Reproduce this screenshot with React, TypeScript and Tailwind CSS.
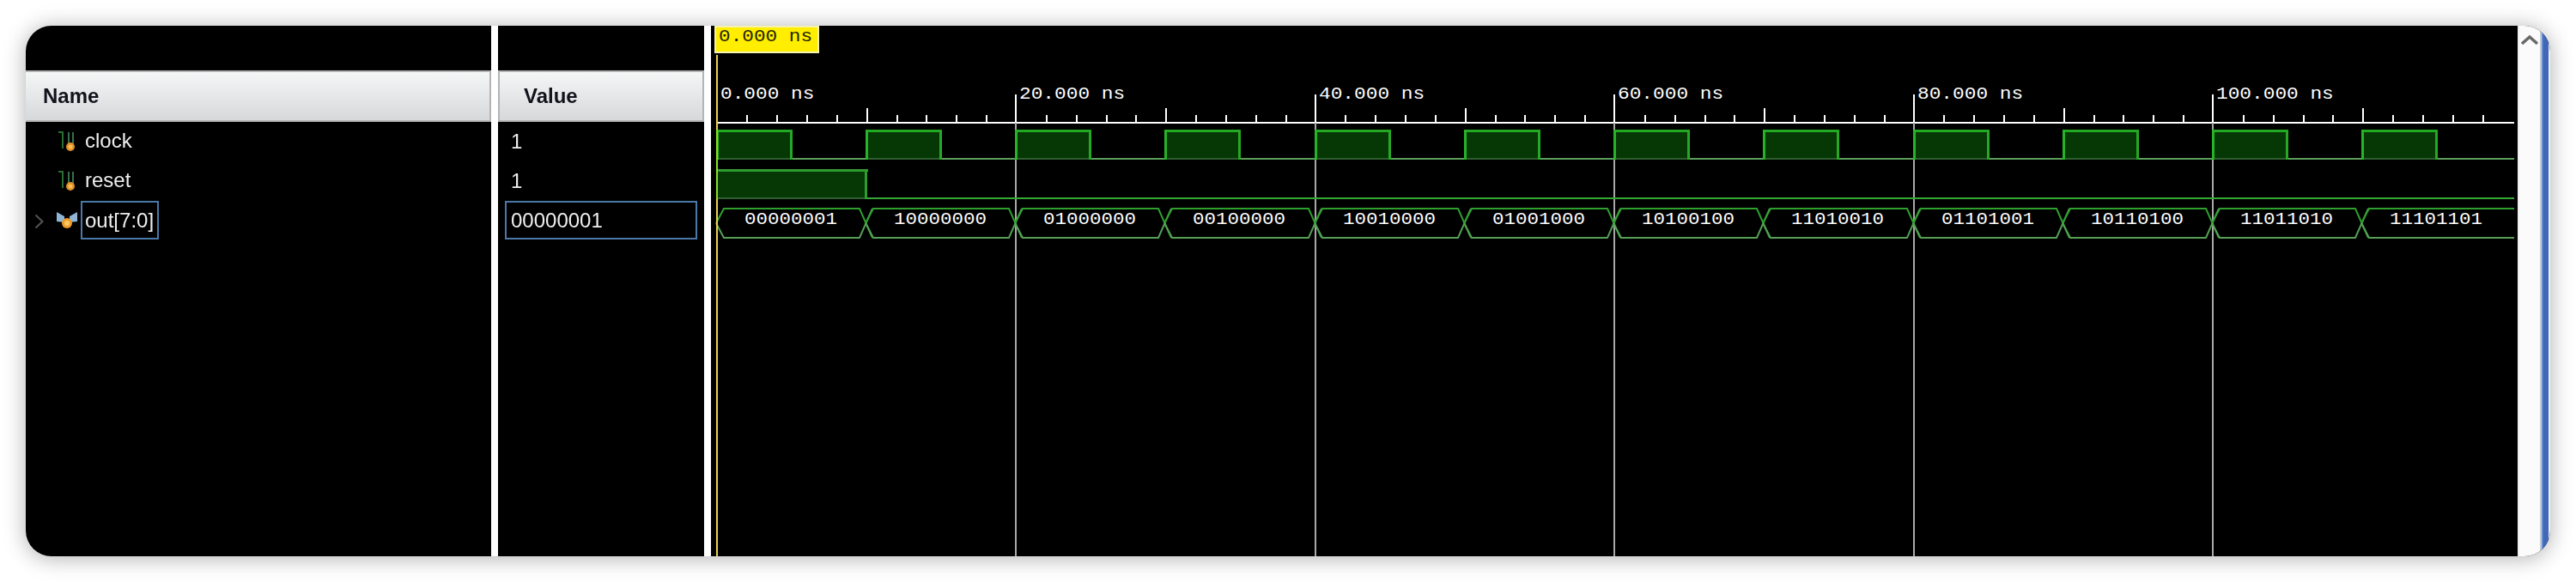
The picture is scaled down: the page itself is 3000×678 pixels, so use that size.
import React from 'react';

const X0 = 834.5;
const NS = 17.425; // px per ns
const END = 2928;
const xAt = (ns: number) => Math.round(X0 + ns * NS);

const busValues = [
  '00000001', '10000000', '01000000', '00100000', '10010000', '01001000',
  '10100100', '11010010', '01101001', '10110100', '11011010', '11101101',
];

const range = (n: number) => Array.from({ length: n }, (_, i) => i);

const ScalarIcon = () => (
  <svg width="24" height="26" viewBox="0 0 24 26" className="shrink-0">
    <path d="M1 2h5v19" fill="none" stroke="#2a6e30" strokeWidth="2" />
    <path d="M13 2v19M18 2v19" fill="none" stroke="#37704a" strokeWidth="2" />
    <circle cx="15" cy="19" r="5" fill="#e0902c" />
    <circle cx="15" cy="19" r="2.5" fill="#ffbc50" />
  </svg>
);

const BusIcon = () => (
  <svg width="24" height="22" viewBox="0 0 24 22" className="shrink-0">
    <path d="M0 1l9 5v7l-9-1zM24 1l-9 5v7l9-1z" fill="#8fb4d4" />
    <circle cx="12" cy="14" r="6" fill="#ee9a2c" />
    <circle cx="12" cy="14" r="3" fill="#ffc860" />
  </svg>
);

const HeaderCell = ({ label, className }: { label: string; className: string }) => (
  <div className={`h-[60px] flex items-center border-y-2 border-[#b4b4b4] bg-gradient-to-b from-[#f5f6f6] to-[#d7d8da] text-[24px] font-bold text-[#10131c] blur-[0.4px] ${className}`}>
    {label}
  </div>
);

const NamePanel = () => (
  <div className="w-[542px] shrink-0 flex flex-col pt-[52px]">
    <HeaderCell label="Name" className="pl-5 border-r-2" />
    <div className="flex flex-col text-[24px] leading-none text-[#eeeeee] blur-[0.4px]">
      <div className="h-[46px] flex items-center pl-[37px] gap-[8px]">
        <ScalarIcon />
        <span className="pb-[2px]">clock</span>
      </div>
      <div className="h-[46px] flex items-center pl-[37px] gap-[8px]">
        <ScalarIcon />
        <span className="pb-[2px]">reset</span>
      </div>
      <div className="h-[46px] flex items-start pl-[10px]">
        <svg width="12" height="18" viewBox="0 0 12 18" className="shrink-0 mt-[15px]">
          <path d="M1.5 1.5l8 7.5-8 7.5" fill="none" stroke="#555555" strokeWidth="2" />
        </svg>
        <div className="ml-[14px] mt-[12px]">
          <BusIcon />
        </div>
        <div className="ml-[4px] w-[91px] h-[45px] border-2 border-[#4a78a8] flex items-center pl-[3px]">
          out[7:0]
        </div>
      </div>
    </div>
  </div>
);

const ValuePanel = () => (
  <div className="w-[240px] shrink-0 flex flex-col pt-[52px]">
    <HeaderCell label="Value" className="pl-[28px] border-x-2" />
    <div className="flex flex-col text-[24px] leading-none text-[#eeeeee] blur-[0.4px]">
      <div className="h-[46px] flex items-center pl-[15px]">1</div>
      <div className="h-[46px] flex items-center pl-[15px]">1</div>
      <div className="h-[46px] flex items-start pl-[8px]">
        <div className="w-[224px] h-[45px] border-2 border-[#4a78a8] flex items-center pl-[5px]">
          00000001
        </div>
      </div>
    </div>
  </div>
);

const WaveLabel = ({ x, y, width, children, anchor, dark }: { x: number; y: number; width: number; children: string; anchor?: 'middle'; dark?: boolean }) => (
  <text
    x={x}
    y={y}
    textAnchor={anchor}
    textLength={width}
    lengthAdjust="spacingAndGlyphs"
    className={`font-['Liberation_Mono',monospace] text-[20px] ${dark ? 'fill-[#222200]' : 'fill-white'}`}
  >
    {children}
  </text>
);

const Waveform = () => (
  <svg viewBox="828 30 2104 618" width="2104" height="618" className="block shrink-0">
    {/* cursor time */}
    <rect x="833" y="31" width="120" height="30" fill="#ffee00" stroke="#f4f2b0" strokeWidth="2" />
    <WaveLabel x={837} y={48} width={109} dark>0.000 ns</WaveLabel>

    {/* ruler */}
    <g shapeRendering="crispEdges">
      <rect x="836" y="142" width={END - 836} height="2" fill="#ffffff" />
      {range(60).map((i) => {
        const ns = i * 2;
        const x = xAt(ns);
        if (ns % 20 === 0) return null;
        const top = ns % 10 === 0 ? 126 : 134;
        return <rect key={ns} x={x} y={top} width="2" height={143 - top} fill="#ffffff" />;
      })}
      {[20, 40, 60, 80, 100].map((ns) => (
        <g key={ns}>
          <rect x={xAt(ns) - 1} y="110" width="2" height="33" fill="#ffffff" />
          <rect x={xAt(ns) - 1} y="143" width="2" height="505" fill="#a8a8a8" />
        </g>
      ))}
    </g>
    {[0, 20, 40, 60, 80, 100].map((ns) => {
      const label = `${ns}.000 ns`;
      return (
        <WaveLabel key={ns} x={ns === 0 ? 839 : xAt(ns) + 4} y={115} width={label.length * 13.68}>
          {label}
        </WaveLabel>
      );
    })}

    {/* clock */}
    <g shapeRendering="crispEdges">
      <rect x="836" y="184" width={END - 836} height="2" fill="#5c9e5c" />
      {range(12).map((i) => {
        const x = xAt(i * 10);
        const w = 86;
        return (
          <g key={i}>
            <rect x={x} y="152" width={w} height="33" fill="#063806" />
            <rect x={x} y="184" width={w} height="2" fill="#2f5f2f" />
            <rect x={x} y="151" width={w + 2} height="3" fill="#22a822" />
            <rect x={x - 1} y="151" width="3" height="35" fill="#26b426" />
            <rect x={x + w - 1} y="151" width="3" height="35" fill="#26a826" />
          </g>
        );
      })}
    </g>

    {/* reset */}
    <g shapeRendering="crispEdges">
      <rect x="1009" y="230" width={END - 1009} height="2" fill="#36a836" />
      <rect x="836" y="198" width="173" height="33" fill="#063806" />
      <rect x="836" y="230" width="173" height="2" fill="#2f5f2f" />
      <rect x="836" y="197" width="175" height="3" fill="#2f9c2f" />
      <rect x="1007" y="197" width="3" height="35" fill="#2f9c2f" />
    </g>

    {/* out[7:0] */}
    {busValues.map((value, i) => {
      const a = xAt(i * 10);
      const b = i === 11 ? END : xAt((i + 1) * 10);
      const tail = i === 11 ? `L${b} 243` : `L${b - 8} 243L${b + 7} 277`;
      const tailLow = i === 11 ? `L${b} 277` : `L${b - 8} 277L${b + 7} 243`;
      return (
        <g key={value + i}>
          <path d={`M${a - 1} 260L${a + 8} 243${tail}`} fill="none" stroke="#2ea02e" strokeWidth="2" />
          <path d={`M${a - 1} 260L${a + 8} 277${tailLow}`} fill="none" stroke="#55a055" strokeWidth="2" />
          <WaveLabel x={a + 86} y={261} width={108} anchor="middle">{value}</WaveLabel>
        </g>
      );
    })}

    {/* cursor */}
    <rect x="834" y="64" width="2" height="584" fill="#e6d24a" shapeRendering="crispEdges" />
    <rect x="834" y="151" width="2" height="81" fill="#86e020" shapeRendering="crispEdges" />
  </svg>
);

const Scrollbar = () => (
  <div className="flex-1 flex">
    <div className="w-[26px] bg-[#fbfbfb] border-l-2 border-[#efefef] flex justify-center pt-[10px]">
      <svg width="20" height="13" viewBox="0 0 20 13">
        <path d="M1 11l9-8 9 8" fill="none" stroke="#6a6a6a" strokeWidth="3.5" />
      </svg>
    </div>
    <div className="w-[2px] bg-[#c4ccd8]" />
    <div className="w-[8px] bg-gradient-to-r from-[#7c9ce0] to-[#3f68b8] to-30%" />
    <div className="w-[2px] bg-[#eef0f0]" />
  </div>
);

export default function App() {
  return (
    <div className="w-[3000px] h-[678px] bg-white pt-[30px] pl-[30px] font-['Liberation_Sans',Arial,sans-serif] overflow-hidden">
      <div className="w-[2940px] h-[618px] rounded-[30px] overflow-hidden bg-black flex shadow-[0_2px_26px_rgba(0,0,0,0.32)]">
        <NamePanel />
        <div className="w-[8px] shrink-0 bg-white" />
        <ValuePanel />
        <div className="w-[8px] shrink-0 bg-white" />
        <Waveform />
        <Scrollbar />
      </div>
    </div>
  );
}
